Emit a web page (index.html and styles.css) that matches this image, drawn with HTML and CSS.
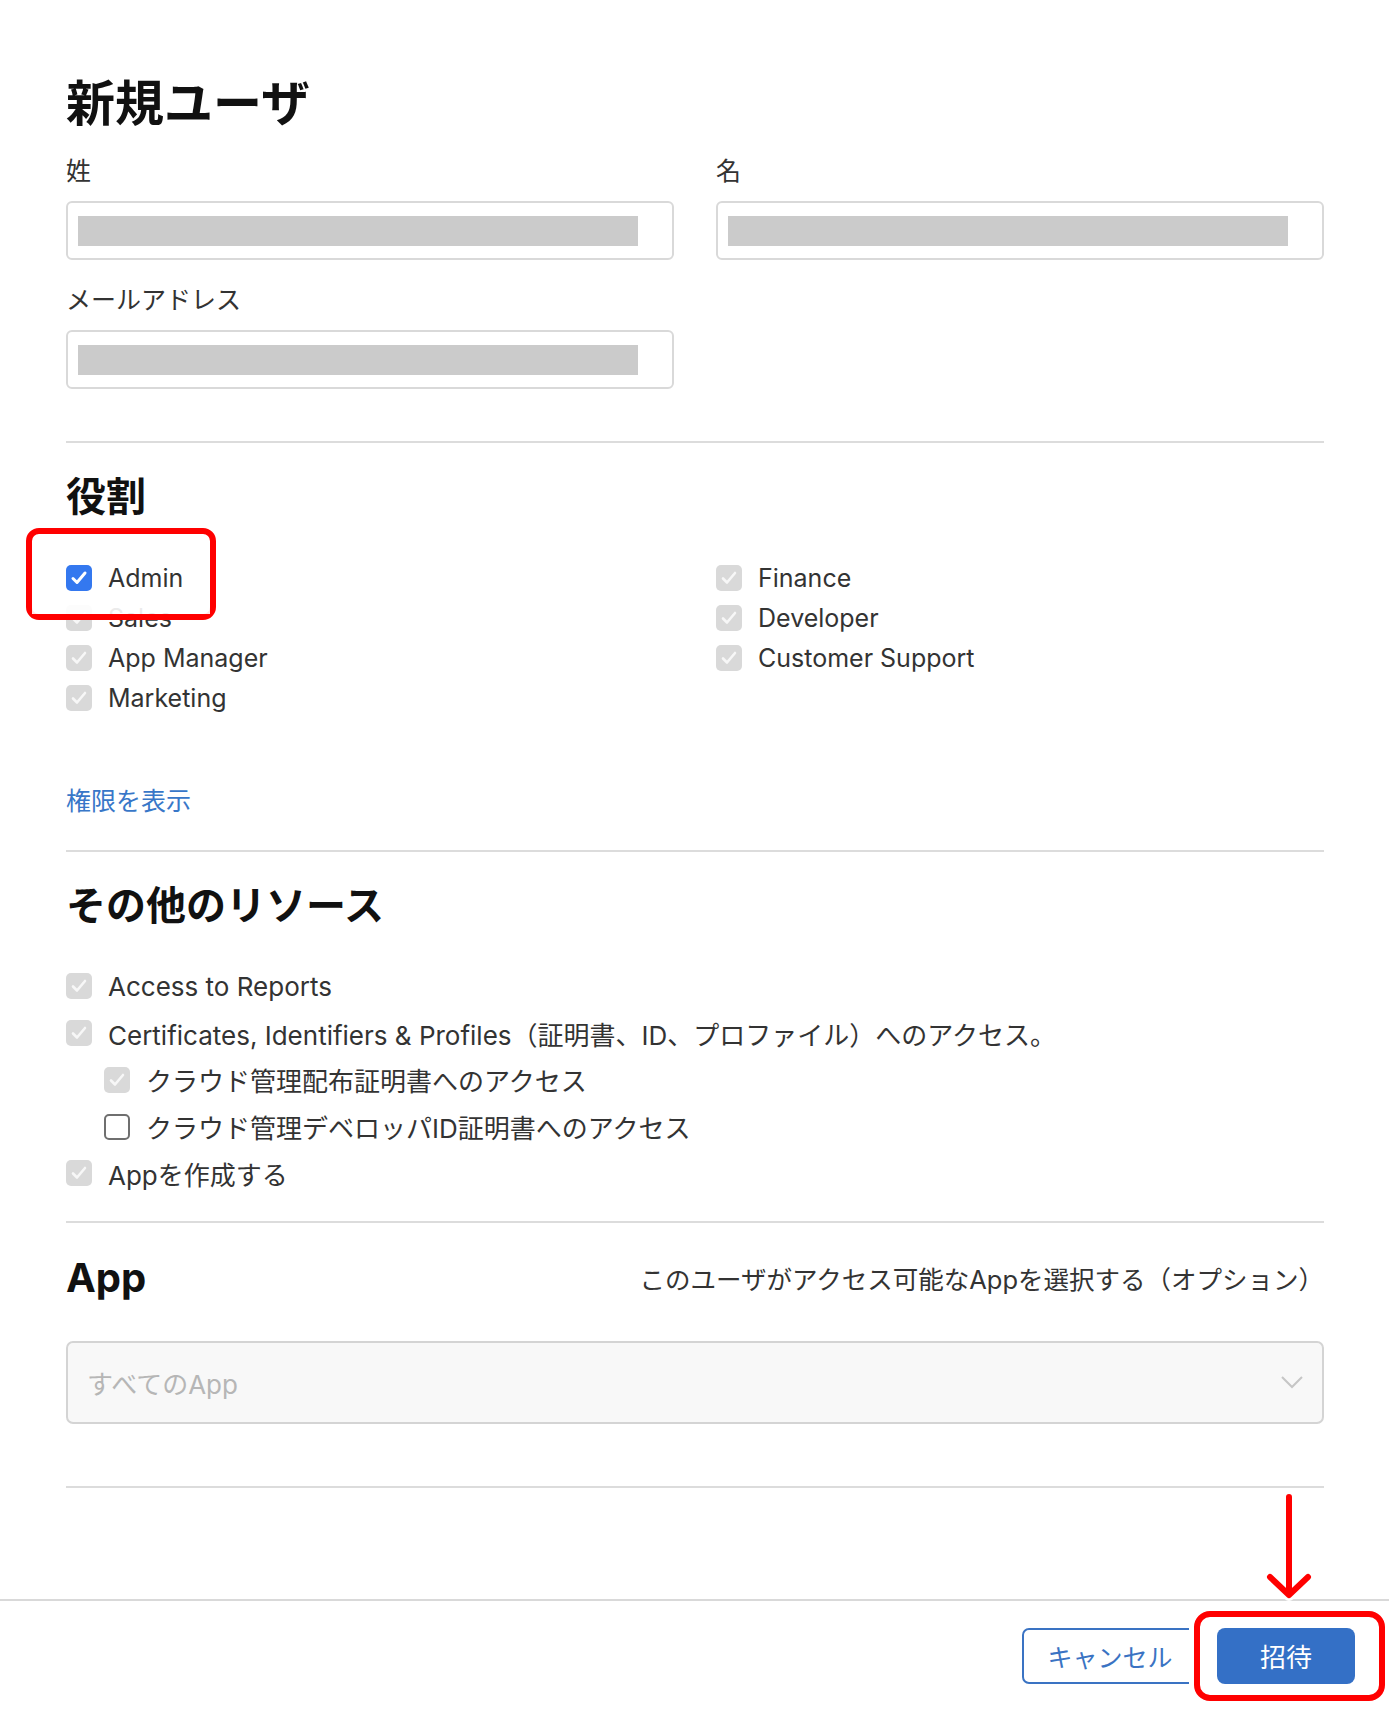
FILE: index.html
```html
<!DOCTYPE html>
<html lang="ja">
<head>
  <meta charset="UTF-8">
  <meta name="viewport" content="width=device-width, initial-scale=1.0">
  <title>新規ユーザ</title>
  <link rel="stylesheet" href="styles.css">
</head>
<body>
  <div class="sheet">
    <div class="content">
      <h1 class="title">新規ユーザ</h1>

      <div class="name-grid">
        <div class="field">
          <label>姓</label>
          <div class="input"><span class="redacted"></span></div>
        </div>
        <div class="field">
          <label>名</label>
          <div class="input"><span class="redacted"></span></div>
        </div>
        <div class="field">
          <label>メールアドレス</label>
          <div class="input"><span class="redacted"></span></div>
        </div>
      </div>

      <hr class="divider first">

      <h2 class="section-title">役割</h2>
      <div class="role-grid">
        <ul class="check-list">
          <li class="check"><span class="box on"><svg viewBox="0 0 20 20"><path d="M4 10.5l4 4L16 5"/></svg></span>Admin</li>
          <li class="check"><span class="box"><svg viewBox="0 0 20 20"><path d="M4 10.5l4 4L16 5"/></svg></span>Sales</li>
          <li class="check"><span class="box"><svg viewBox="0 0 20 20"><path d="M4 10.5l4 4L16 5"/></svg></span>App Manager</li>
          <li class="check"><span class="box"><svg viewBox="0 0 20 20"><path d="M4 10.5l4 4L16 5"/></svg></span>Marketing</li>
        </ul>
        <ul class="check-list">
          <li class="check"><span class="box"><svg viewBox="0 0 20 20"><path d="M4 10.5l4 4L16 5"/></svg></span>Finance</li>
          <li class="check"><span class="box"><svg viewBox="0 0 20 20"><path d="M4 10.5l4 4L16 5"/></svg></span>Developer</li>
          <li class="check"><span class="box"><svg viewBox="0 0 20 20"><path d="M4 10.5l4 4L16 5"/></svg></span>Customer Support</li>
        </ul>
      </div>
      <a class="link" href="#">権限を表示</a>

      <hr class="divider">

      <h2 class="section-title">その他のリソース</h2>
      <ul class="check-list resources">
        <li class="check"><span class="box"><svg viewBox="0 0 20 20"><path d="M4 10.5l4 4L16 5"/></svg></span>Access to Reports</li>
        <li class="check"><span class="box"><svg viewBox="0 0 20 20"><path d="M4 10.5l4 4L16 5"/></svg></span>Certificates, Identifiers &amp; Profiles（証明書、ID、プロファイル）へのアクセス。</li>
        <li class="check sub"><span class="box"><svg viewBox="0 0 20 20"><path d="M4 10.5l4 4L16 5"/></svg></span>クラウド管理配布証明書へのアクセス</li>
        <li class="check sub"><span class="box off"></span>クラウド管理デベロッパID証明書へのアクセス</li>
        <li class="check"><span class="box"><svg viewBox="0 0 20 20"><path d="M4 10.5l4 4L16 5"/></svg></span>Appを作成する</li>
      </ul>

      <hr class="divider third">

      <div class="app-head">
        <h2 class="section-title">App</h2>
        <span class="hint">このユーザがアクセス可能なAppを選択する（オプション）</span>
      </div>
      <div class="select">
        <span>すべてのApp</span>
        <svg class="chevron" viewBox="0 0 22 13"><path d="M1 1l10 10L21 1"/></svg>
      </div>

      <hr class="divider last">
    </div>

    <div class="footer">
      <button class="btn cancel">キャンセル</button>
      <div class="callout">
        <button class="btn invite">招待</button>
      </div>
    </div>

    <!-- annotations -->
    <div class="mark-admin"></div>
    <svg class="mark-arrow" viewBox="0 0 50 112">
      <path class="halo" d="M24 7V104M5 87L24 105L43 87"/>
      <path class="stroke" d="M24 7V104M5 87L24 105L43 87"/>
    </svg>
  </div>
</body>
</html>
```

FILE: styles.css
```css
* {
  box-sizing: border-box;
}
body {
  margin: 0;
  background: #fff;
  color: #333;
  font-family: Inter, "Noto Sans CJK JP", sans-serif;
}
.sheet {
  position: relative;
  width: 1389px;
  min-height: 1712px;
}
.content {
  padding: 76px 65px 0 66px;
}
.title {
  margin: 0;
  font-size: 49px;
  line-height: 56px;
  font-weight: 700;
  color: #111;
}
.name-grid,
.role-grid {
  display: grid;
  grid-template-columns: 1fr 1fr;
  column-gap: 42px;
}
.name-grid {
  row-gap: 22px;
  margin-top: 21px;
}
.field label {
  display: block;
  font-size: 25px;
  line-height: 36px;
  margin-bottom: 12px;
}
.input {
  height: 59px;
  border: 2px solid #d9d9d9;
  border-radius: 6px;
  padding: 13px 34px 0 10px;
}
.redacted {
  display: block;
  height: 30px;
  background: #cbcbcb;
}
.divider {
  height: 2px;
  border: 0;
  background: #dcdcdc;
  margin: 31px 0 0;
}
.divider.first {
  margin-top: 52px;
}
.divider.third {
  margin-top: 24px;
}
.divider.last {
  margin-top: 62px;
}
.section-title {
  margin: 30px 0 0;
  font-size: 40px;
  line-height: 48px;
  font-weight: 700;
  color: #111;
}
.role-grid {
  margin-top: 37px;
}
.check-list {
  list-style: none;
  margin: 0;
  padding: 0;
}
.check {
  display: flex;
  align-items: center;
  height: 40px;
  font-size: 25px;
  white-space: nowrap;
}
.resources {
  margin-top: 33px;
}
.resources .check {
  height: 46.75px;
  font-size: 26px;
}
.check.sub {
  padding-left: 38px;
}
.box {
  flex: none;
  display: flex;
  align-items: center;
  justify-content: center;
  width: 26px;
  height: 26px;
  margin-right: 16px;
  border-radius: 5px;
  background: #d9d9d9;
}
.box svg {
  width: 20px;
  height: 20px;
  fill: none;
  stroke: #f7f7f7;
  stroke-width: 2.6;
  stroke-linecap: round;
  stroke-linejoin: round;
}
.box.on {
  background: #3478ef;
}
.box.on svg {
  stroke: #fff;
  stroke-width: 3;
}
.box.off {
  background: #fff;
  border: 2px solid #6f6f6f;
}
.link {
  display: block;
  margin-top: 65px;
  font-size: 25px;
  line-height: 36px;
  color: #3877c8;
  text-decoration: none;
}
.app-head {
  display: flex;
  justify-content: space-between;
  align-items: center;
  margin-top: 31px;
}
.app-head .section-title {
  margin: 0;
}
.hint {
  font-size: 25.5px;
  color: #333;
}
.select {
  display: flex;
  align-items: center;
  justify-content: space-between;
  height: 83px;
  margin-top: 39px;
  padding: 0 19px;
  border: 2px solid #d4d4d4;
  border-radius: 7px;
  background: #f8f8f8;
  color: #b6b6b6;
  font-size: 26px;
}
.chevron {
  width: 22px;
  height: 13px;
  fill: none;
  stroke: #c6c6c6;
  stroke-width: 2;
}
.footer {
  display: flex;
  justify-content: flex-end;
  align-items: center;
  height: 112px;
  margin-top: 111px;
  padding-right: 4px;
  border-top: 2px solid #d9d9d9;
}
.btn {
  height: 56px;
  font-family: inherit;
  font-size: 25px;
  cursor: pointer;
}
.cancel {
  width: 176px;
  border: 2px solid #3a73c3;
  border-radius: 7px;
  background: #fff;
  color: #3a73c3;
}
.callout {
  position: relative;
  margin-left: -4px;
  padding: 11px 24px 11px 17px;
  border: 6px solid #f00;
  border-radius: 16px;
  background: #fff;
  box-shadow: 0 0 0 5px #fff;
}
.invite {
  display: block;
  width: 138px;
  border: 0;
  border-radius: 8px;
  background: #3470c6;
  color: #fff;
  font-size: 26px;
}
.mark-admin {
  position: absolute;
  left: 26px;
  top: 528px;
  width: 190px;
  height: 92px;
  border: 6px solid #f00;
  border-radius: 13px;
  pointer-events: none;
}
.mark-admin::after {
  content: "";
  position: absolute;
  left: 0;
  right: 0;
  bottom: 0;
  height: 14px;
  background: rgba(255, 255, 255, 0.9);
}
.mark-arrow {
  position: absolute;
  left: 1265px;
  top: 1490px;
  width: 50px;
  height: 112px;
  fill: none;
  stroke-linecap: round;
  stroke-linejoin: round;
}
.mark-arrow .halo {
  stroke: #fff;
  stroke-width: 12;
}
.mark-arrow .stroke {
  stroke: #f00;
  stroke-width: 6;
}
```
